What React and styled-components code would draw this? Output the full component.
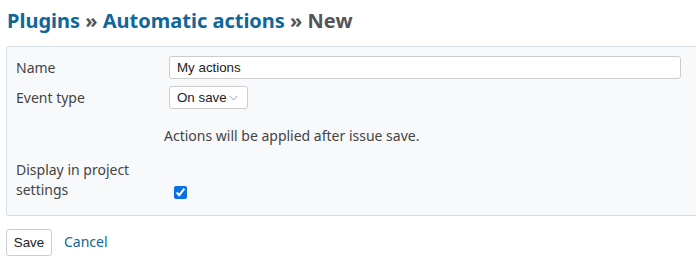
import React from "react";
import styled, { createGlobalStyle } from "styled-components";

const Global = createGlobalStyle`
  html, body {
    margin: 0;
    padding: 0;
    background: #fff;
    overflow: hidden;
  }
  body {
    font-family: "Noto Sans", "Open Sans", sans-serif;
    font-size: 14px;
    color: #333;
  }
`;

const Page = styled.div`
  padding: 6px 0 0 6px;
`;

const Title = styled.h2`
  margin: 0 0 10px 1px;
  font-size: 20px;
  line-height: 30px;
  font-weight: 700;
  color: #555;

  a {
    color: #169;
    text-decoration: none;
  }
`;

const Box = styled.div`
  margin-right: -12px;
  background: #f8f9fb;
  border: 1px solid #d6dce4;
  border-radius: 3px;
  padding: 9px 26px 15px 9px;
`;

const Row = styled.div`
  display: grid;
  grid-template-columns: 153px 1fr;
  align-items: ${(p) => p.$align || "center"};
  margin-bottom: ${(p) => (p.$gap === undefined ? 7 : p.$gap)}px;
`;

const Label = styled.label`
  line-height: 20px;
  color: #444;
`;

const TextInput = styled.input`
  box-sizing: border-box;
  width: 100%;
  height: 23px;
  padding: 0 7px;
  border: 1px solid #ccc;
  border-radius: 3px;
  background: #fff;
  font-family: "Liberation Sans", Arial, sans-serif;
  font-size: 13.33px;
  color: #222;
  outline: none;
`;

const SelectWrap = styled.span`
  position: relative;
  display: inline-block;
  width: 79px;
`;

const Select = styled.select`
  box-sizing: border-box;
  appearance: none;
  width: 100%;
  height: 23px;
  padding: 0 12px 0 7px;
  border: 1px solid #ccc;
  border-radius: 3px;
  background: #fff;
  font-family: "Liberation Sans", Arial, sans-serif;
  font-size: 13.33px;
  color: #222;
  outline: none;
`;

const Chevron = styled.svg`
  position: absolute;
  right: 10px;
  top: 9px;
  pointer-events: none;
`;

const Info = styled.p`
  margin: 17px 0 14px 148px;
  line-height: 20px;
  color: #444;
`;

const Check = styled.input`
  display: block;
  width: 13px;
  height: 13px;
  margin: 0 0 1px 5px;
  accent-color: #0b6fe6;
`;

const Actions = styled.div`
  display: flex;
  align-items: center;
  gap: 12px;
  margin-top: 13px;
`;

const Button = styled.button`
  box-sizing: border-box;
  height: 27px;
  width: 46px;
  padding: 0;
  border: 1px solid #ccc;
  border-radius: 3px;
  background: #fff;
  font-family: "Liberation Sans", Arial, sans-serif;
  font-size: 13.33px;
  color: #222;
`;

const LinkText = styled.a`
  color: #169;
  text-decoration: none;
  margin-top: -3px;
`;

export default function App() {
  return (
    <>
      <Global />
      <Page>
        <Title>
          <a href="#">Plugins</a> » <a href="#">Automatic actions</a> » New
        </Title>
        <Box>
          <Row>
            <Label>Name</Label>
            <TextInput defaultValue="My actions" />
          </Row>
          <Row $gap={0}>
            <Label>Event type</Label>
            <div>
              <SelectWrap>
                <Select defaultValue="save">
                  <option value="save">On save</option>
                </Select>
                <Chevron width="9" height="6" viewBox="0 0 9 6">
                  <path d="M0.5 0.8 L4.5 4.8 L8.5 0.8" fill="none" stroke="#999" strokeWidth="1" />
                </Chevron>
              </SelectWrap>
            </div>
          </Row>
          <Info>Actions will be applied after issue save.</Info>
          <Row $align="end" $gap={0}>
            <Label>
              Display in project
              <br />
              settings
            </Label>
            <div>
              <Check type="checkbox" defaultChecked />
            </div>
          </Row>
        </Box>
        <Actions>
          <Button>Save</Button>
          <LinkText href="#">Cancel</LinkText>
        </Actions>
      </Page>
    </>
  );
}
